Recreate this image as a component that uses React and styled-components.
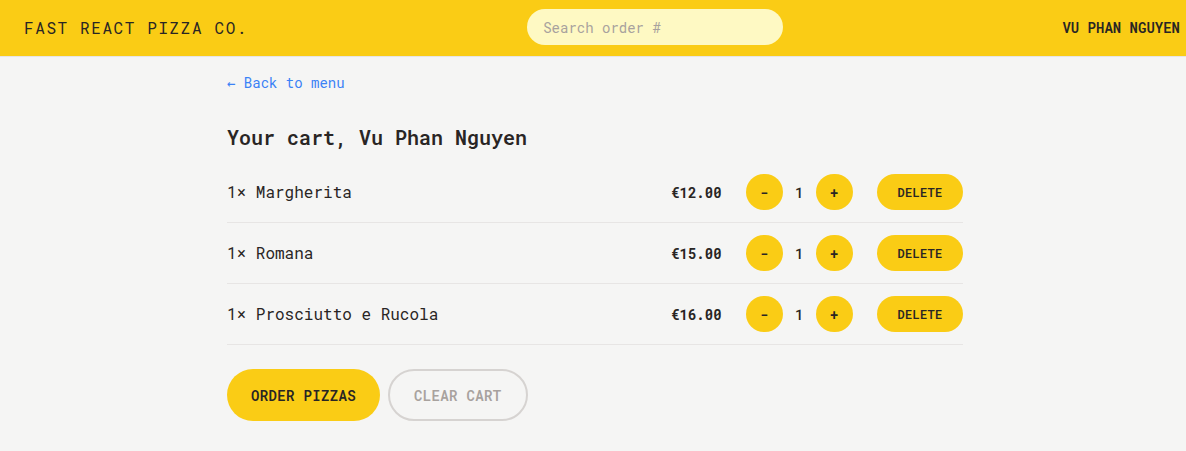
import React from 'react';
import styled, { createGlobalStyle } from 'styled-components';

const GlobalStyle = createGlobalStyle`
  * { box-sizing: border-box; }
  body {
    margin: 0;
    background: #f5f5f4;
    color: #292524;
    font-family: "Roboto Mono", "DejaVu Sans Mono", monospace;
  }
`;

const Header = styled.header`
  display: flex;
  align-items: center;
  justify-content: space-between;
  height: 57px;
  padding: 0 6px 2px 24px;
  background: #facc15;
  border-bottom: 1px solid #e7e5e4;
  text-transform: uppercase;
`;

const Logo = styled.a`
  font-size: 16px;
  letter-spacing: 0.1em;
  color: #292524;
  text-decoration: none;
`;

const Search = styled.input`
  width: 256px;
  height: 36px;
  padding: 8px 16px;
  border: none;
  border-radius: 999px;
  background: #fef9c3;
  font-family: inherit;
  font-size: 14px;
  color: #292524;
  outline: none;
  &::placeholder {
    color: #a8a29e;
  }
`;

const Username = styled.div`
  font-size: 14px;
  font-weight: 600;
`;

const Main = styled.main`
  max-width: 768px;
  margin: 0 auto;
  padding: 14px 14px 12px 18px;
`;

const BackLink = styled.a`
  display: inline-block;
  font-size: 14px;
  line-height: 20px;
  color: #3b82f6;
  text-decoration: none;
`;

const Title = styled.h2`
  margin: 30px 0 0;
  font-size: 20px;
  line-height: 28px;
  font-weight: 600;
`;

const List = styled.ul`
  margin: 11px 0 0;
  padding: 0;
  list-style: none;
  border-bottom: 1px solid #e7e5e4;
`;

const Item = styled.li`
  display: flex;
  align-items: center;
  justify-content: space-between;
  padding: 12px 0;
  & + & {
    border-top: 1px solid #e7e5e4;
  }
`;

const Name = styled.p`
  margin: 0;
  font-size: 16px;
  line-height: 24px;
`;

const Controls = styled.div`
  display: flex;
  align-items: center;
  gap: 24px;
`;

const Price = styled.p`
  margin: 0;
  font-size: 14px;
  font-weight: 700;
`;

const Quantity = styled.div`
  display: flex;
  align-items: center;
  gap: 12.5px;
`;

const Count = styled.span`
  font-size: 14px;
  font-weight: 500;
`;

const Button = styled.button`
  display: inline-block;
  border: none;
  border-radius: 999px;
  background: #facc15;
  color: #292524;
  font-family: inherit;
  font-weight: 600;
  text-transform: uppercase;
  letter-spacing: 0.025em;
  cursor: pointer;
`;

const RoundButton = styled(Button)`
  width: 37px;
  height: 36px;
  padding: 0;
  font-size: 14px;
`;

const SmallButton = styled(Button)`
  height: 36px;
  padding: 0 20.5px;
  font-size: 12px;
`;

const Actions = styled.div`
  display: flex;
  gap: 8px;
  margin-top: 24px;
`;

const BigButton = styled(Button)`
  height: 52px;
  padding: 0 24px;
  font-size: 14px;
`;

const GhostButton = styled(BigButton)`
  background: transparent;
  border: 2px solid #d6d3d1;
  color: #a8a29e;
`;

const cart = [
  { id: 1, name: 'Margherita', qty: 1, price: 12 },
  { id: 2, name: 'Romana', qty: 1, price: 15 },
  { id: 3, name: 'Prosciutto e Rucola', qty: 1, price: 16 },
];

export default function App() {
  return (
    <>
      <GlobalStyle />
      <Header>
        <Logo href="#">Fast React Pizza Co.</Logo>
        <Search placeholder="Search order #" />
        <Username>Vu Phan Nguyen</Username>
      </Header>
      <Main>
        <BackLink href="#">&larr; Back to menu</BackLink>
        <Title>Your cart, Vu Phan Nguyen</Title>
        <List>
          {cart.map(item => (
            <Item key={item.id}>
              <Name>{item.qty}&times; {item.name}</Name>
              <Controls>
                <Price>€{item.price.toFixed(2)}</Price>
                <Quantity>
                  <RoundButton>-</RoundButton>
                  <Count>{item.qty}</Count>
                  <RoundButton>+</RoundButton>
                </Quantity>
                <SmallButton>Delete</SmallButton>
              </Controls>
            </Item>
          ))}
        </List>
        <Actions>
          <BigButton>Order pizzas</BigButton>
          <GhostButton>Clear cart</GhostButton>
        </Actions>
      </Main>
    </>
  );
}
